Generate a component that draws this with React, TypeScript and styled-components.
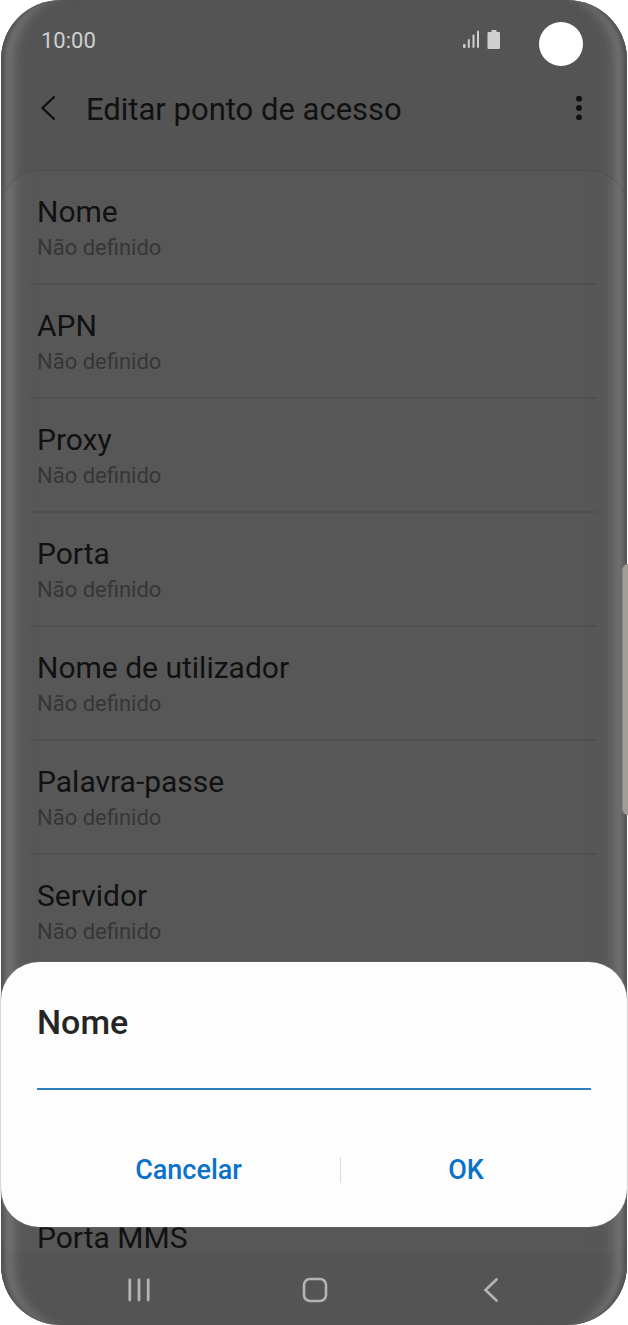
import React, { useState } from "react";
import styled, { createGlobalStyle } from "styled-components";

const GlobalStyle = createGlobalStyle`
  * { box-sizing: border-box; }
  body {
    margin: 0;
    background: #ffffff;
    font-family: Roboto, "Noto Sans", sans-serif;
  }
  button {
    padding: 0;
    border: 0;
    background: none;
    font: inherit;
    color: inherit;
    cursor: pointer;
  }
  svg { display: block; }
`;

const Phone = styled.div`
  position: relative;
  display: flex;
  flex-direction: column;
  margin: 0 1px;
  border-radius: 60px;
  background: #545454;
  box-shadow:
    inset 8px 0 4px -4px #525252,
    inset -8px 0 4px -4px #525252,
    inset 20px 0 8px -8px #717174,
    inset -20px 0 8px -8px #717174,
    inset 34px 0 16px -16px #5d5d5e,
    inset -34px 0 16px -16px #5d5d5e;
`;

const StatusBar = styled.div`
  display: flex;
  align-items: center;
  height: 82px;
  padding: 0 44px 0 40px;
  color: #cfcfcf;
  font-size: 22px;
  line-height: 26px;
`;

const Clock = styled.time`
  flex: 1;
`;

const StatusIcons = styled.span`
  display: flex;
  gap: 7px;
  padding-bottom: 2px;
`;

const Camera = styled.span`
  width: 44px;
  height: 44px;
  margin: 6px 0 0 38px;
  border-radius: 50%;
  background: #ffffff;
`;

const AppBar = styled.header`
  display: flex;
  align-items: center;
  height: 88px;
  padding: 0 35px 36px 34px;
  color: #111111;
`;

const IconButton = styled.button`
  display: grid;
  place-items: center;
  width: 26px;
  height: 40px;
`;

const PageTitle = styled.h1`
  flex: 1;
  margin: 4px 0 0 25px;
  font-size: 31px;
  font-weight: 400;
  line-height: 38px;
`;

const Settings = styled.ul`
  margin: 0;
  padding: 0;
  list-style: none;
  border-top: 1px solid #4e4e4e;
  border-radius: 38px 38px 18px 18px;
  background: rgba(255, 255, 255, 0.02);
`;

const Setting = styled.li<{ $last?: boolean }>`
  height: ${(p) => (p.$last ? "55px" : "114px")};
  margin: 0 30px;
  padding: 23px 6px 0;
  border-bottom: ${(p) => (p.$last ? "0" : "2px solid #505050")};
`;

const SettingName = styled.div`
  color: #111111;
  font-size: 30px;
  line-height: 36px;
`;

const SettingValue = styled.div`
  color: #363636;
  font-size: 22px;
  line-height: 36px;
`;

const NavBar = styled.nav`
  display: flex;
  justify-content: space-between;
  align-items: center;
  height: 73px;
  padding: 2px 106px 0 108px;
  color: #b4b4b4;
`;

const NavButton = styled.button`
  display: grid;
  place-items: center;
  width: 60px;
  height: 40px;
`;

const EdgeHandle = styled.span`
  position: absolute;
  top: 564px;
  right: -1px;
  width: 6px;
  height: 251px;
  border-left: 1px solid #8b8989;
  border-radius: 6px 0 0 6px;
  background: #a09c98;
`;

const Dialog = styled.form`
  position: absolute;
  right: 0;
  bottom: 98px;
  left: 0;
  padding: 39px 36px 31px;
  border-radius: 38px;
  background: #fdfdfd;
  box-shadow: 0 0 0 1px rgba(120, 120, 120, 0.3);
`;

const DialogLabel = styled.label`
  display: block;
  color: #252525;
  font-size: 34px;
  font-weight: 500;
  line-height: 42px;
`;

const TextInput = styled.input`
  display: block;
  width: 100%;
  height: 47px;
  padding: 0;
  border: 0;
  border-bottom: 2px solid #2a7fbd;
  border-radius: 0;
  outline: 0;
  background: transparent;
  color: #252525;
  font: 400 28px/36px Roboto, "Noto Sans", sans-serif;
`;

const Actions = styled.div`
  display: flex;
  align-items: center;
  height: 52px;
  margin-top: 54px;
`;

const Action = styled.button<{ $grow: number }>`
  flex: ${(p) => p.$grow} 1 0;
  height: 52px;
  color: #0b72c9;
  font-size: 27px;
  font-weight: 500;
  line-height: 32px;
`;

const Divider = styled.span`
  width: 1px;
  height: 26px;
  background: #dcdcdc;
`;

const settings = [
  "Nome",
  "APN",
  "Proxy",
  "Porta",
  "Nome de utilizador",
  "Palavra-passe",
  "Servidor",
];

const SignalIcon = () => (
  <svg width="17" height="19" viewBox="0 0 17 19" fill="currentColor" aria-hidden="true">
    <rect x="0" y="14" width="2.600" height="4" rx="1" />
    <rect x="4.800" y="9" width="2" height="9" rx="1" />
    <rect x="9.500" y="4.500" width="2" height="13.500" rx="1" />
    <rect x="14" y="0.500" width="2" height="17.500" rx="1" />
  </svg>
);

const BatteryIcon = () => (
  <svg width="14" height="20" viewBox="0 0 14 20" fill="currentColor" aria-hidden="true">
    <path d="M4.500 0h5v2h2.500a1 1 0 0 1 1 1V18a1 1 0 0 1-1 1H1.500a1 1 0 0 1-1-1V3a1 1 0 0 1 1-1h3z" />
  </svg>
);

const BackIcon = () => (
  <svg width="16" height="26" viewBox="0 0 16 26" fill="none" stroke="currentColor" strokeWidth="2.400" aria-hidden="true">
    <path d="M14.500 1.500 2.500 13l12 11.500" />
  </svg>
);

const MoreIcon = () => (
  <svg width="8" height="26" viewBox="0 0 8 26" fill="currentColor" aria-hidden="true">
    <circle cx="4" cy="3.700" r="2.900" />
    <circle cx="4" cy="13" r="2.900" />
    <circle cx="4" cy="22.300" r="2.900" />
  </svg>
);

const RecentsIcon = () => (
  <svg width="24" height="24" viewBox="0 0 24 24" stroke="currentColor" strokeWidth="2.800" strokeLinecap="round" aria-hidden="true">
    <path d="M2.800 2v20M12 2v20M21.200 2v20" />
  </svg>
);

const HomeIcon = () => (
  <svg width="26" height="26" viewBox="0 0 26 26" fill="none" stroke="currentColor" strokeWidth="2.600" aria-hidden="true">
    <rect x="2" y="2" width="22" height="22" rx="6" />
  </svg>
);

const NavBackIcon = () => (
  <svg width="16" height="24" viewBox="0 0 16 24" fill="none" stroke="currentColor" strokeWidth="2.600" strokeLinecap="round" aria-hidden="true">
    <path d="M13.500 1.500 2.500 12l11 10.500" />
  </svg>
);

export default function App() {
  const [name, setName] = useState("");
  return (
    <>
      <GlobalStyle />
      <Phone>
        <StatusBar>
          <Clock>10:00</Clock>
          <StatusIcons>
            <SignalIcon />
            <BatteryIcon />
          </StatusIcons>
          <Camera />
        </StatusBar>
        <AppBar>
          <IconButton type="button" aria-label="Voltar">
            <BackIcon />
          </IconButton>
          <PageTitle>Editar ponto de acesso</PageTitle>
          <IconButton type="button" aria-label="Mais opções">
            <MoreIcon />
          </IconButton>
        </AppBar>
        <Settings>
          {settings.map((label) => (
            <Setting key={label}>
              <SettingName>{label}</SettingName>
              <SettingValue>Não definido</SettingValue>
            </Setting>
          ))}
          <Setting aria-hidden="true" />
          <Setting aria-hidden="true" />
          <Setting $last>
            <SettingName>Porta MMS</SettingName>
          </Setting>
        </Settings>
        <NavBar>
          <NavButton type="button" aria-label="Recentes">
            <RecentsIcon />
          </NavButton>
          <NavButton type="button" aria-label="Início">
            <HomeIcon />
          </NavButton>
          <NavButton type="button" aria-label="Anterior">
            <NavBackIcon />
          </NavButton>
        </NavBar>
        <EdgeHandle />
        <Dialog role="dialog" aria-labelledby="name-label" onSubmit={(e) => e.preventDefault()}>
          <DialogLabel id="name-label" htmlFor="name">
            Nome
          </DialogLabel>
          <TextInput id="name" value={name} onChange={(e) => setName(e.target.value)} />
          <Actions>
            <Action type="button" $grow={303}>
              Cancelar
            </Action>
            <Divider />
            <Action type="submit" $grow={250}>
              OK
            </Action>
          </Actions>
        </Dialog>
      </Phone>
    </>
  );
}
